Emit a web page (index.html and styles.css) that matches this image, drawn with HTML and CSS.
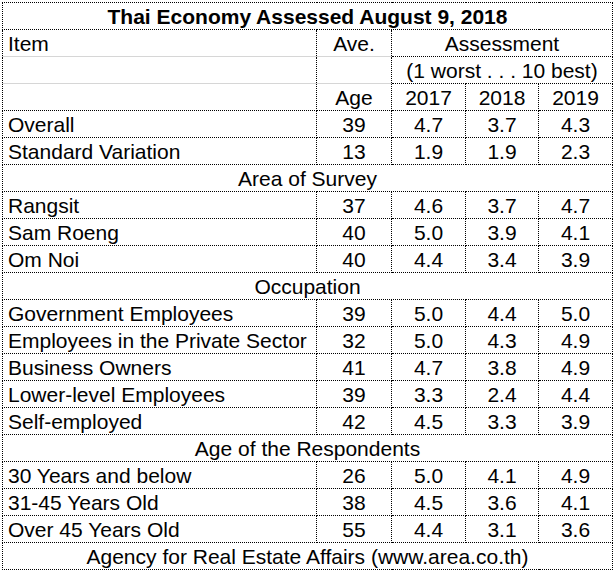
FILE: index.html
```html
<!DOCTYPE html>
<html>
<head>
<meta charset="utf-8">
<link rel="stylesheet" href="styles.css">
</head>
<body>
<table class="sheet">
  <colgroup>
    <col class="c-item"><col class="c-ave"><col class="c-yr"><col class="c-yr2"><col class="c-yr">
  </colgroup>
  <tbody>
    <tr><td colspan="5" class="title">Thai Economy Assessed August 9, 2018</td></tr>
    <tr>
      <td class="hd-a">Item</td>
      <td class="num hd-a">Ave.</td>
      <td colspan="3" class="num">Assessment</td>
    </tr>
    <tr>
      <td class="hd-b"></td>
      <td class="hd-b"></td>
      <td colspan="3" class="num">(1 worst . . . 10 best)</td>
    </tr>
    <tr>
      <td class="hd-c"></td>
      <td class="num hd-c">Age</td>
      <td class="num">2017</td><td class="num">2018</td><td class="num">2019</td>
    </tr>
    <tr><td>Overall</td><td class="num">39</td><td class="num">4.7</td><td class="num">3.7</td><td class="num">4.3</td></tr>
    <tr><td>Standard Variation</td><td class="num">13</td><td class="num">1.9</td><td class="num">1.9</td><td class="num">2.3</td></tr>
    <tr><td colspan="5" class="sec">Area of Survey</td></tr>
    <tr><td>Rangsit</td><td class="num">37</td><td class="num">4.6</td><td class="num">3.7</td><td class="num">4.7</td></tr>
    <tr><td>Sam Roeng</td><td class="num">40</td><td class="num">5.0</td><td class="num">3.9</td><td class="num">4.1</td></tr>
    <tr><td>Om Noi</td><td class="num">40</td><td class="num">4.4</td><td class="num">3.4</td><td class="num">3.9</td></tr>
    <tr><td colspan="5" class="sec">Occupation</td></tr>
    <tr><td>Government Employees</td><td class="num">39</td><td class="num">5.0</td><td class="num">4.4</td><td class="num">5.0</td></tr>
    <tr><td>Employees in the Private Sector</td><td class="num">32</td><td class="num">5.0</td><td class="num">4.3</td><td class="num">4.9</td></tr>
    <tr><td>Business Owners</td><td class="num">41</td><td class="num">4.7</td><td class="num">3.8</td><td class="num">4.9</td></tr>
    <tr><td>Lower-level Employees</td><td class="num">39</td><td class="num">3.3</td><td class="num">2.4</td><td class="num">4.4</td></tr>
    <tr><td>Self-employed</td><td class="num">42</td><td class="num">4.5</td><td class="num">3.3</td><td class="num">3.9</td></tr>
    <tr><td colspan="5" class="sec">Age of the Respondents</td></tr>
    <tr><td>30 Years and below</td><td class="num">26</td><td class="num">5.0</td><td class="num">4.1</td><td class="num">4.9</td></tr>
    <tr><td>31-45 Years Old</td><td class="num">38</td><td class="num">4.5</td><td class="num">3.6</td><td class="num">4.1</td></tr>
    <tr><td>Over 45 Years Old</td><td class="num">55</td><td class="num">4.4</td><td class="num">3.1</td><td class="num">3.6</td></tr>
    <tr><td colspan="5" class="sec">Agency for Real Estate Affairs (www.area.co.th)</td></tr>
  </tbody>
</table>
</body>
</html>
```

FILE: styles.css
```css
html, body {
  margin: 0;
  padding: 0;
  background: #fff;
}
body {
  padding: 2px 0 0 2px;
}
.sheet {
  border-collapse: collapse;
  table-layout: fixed;
  width: 611px;
  font-family: "Liberation Sans", Arial, sans-serif;
  font-size: 21px;
  color: #000;
}
.c-item { width: 314px; }
.c-ave { width: 75px; }
.c-yr { width: 74px; }
.c-yr2 { width: 73px; }
.sheet tr {
  height: 27px;
}
.sheet td {
  border: 1px dotted #000;
  padding: 0 0 2px 5px;
  height: 24px;
  line-height: 20px;
  vertical-align: bottom;
  white-space: nowrap;
  overflow: hidden;
}
.sheet td.num {
  text-align: center;
  padding-left: 0;
}
.sheet td.title {
  text-align: center;
  font-weight: bold;
  padding-left: 0;
}
.sheet td.sec {
  text-align: center;
  padding-left: 0;
}
.sheet td.hd-a {
  border-bottom: 1px solid #d6d6d6;
}
.sheet td.hd-b {
  border-top: 1px solid #d6d6d6;
  border-bottom: 1px solid #d6d6d6;
}
.sheet td.hd-c {
  border-top: 1px solid #d6d6d6;
}
```
